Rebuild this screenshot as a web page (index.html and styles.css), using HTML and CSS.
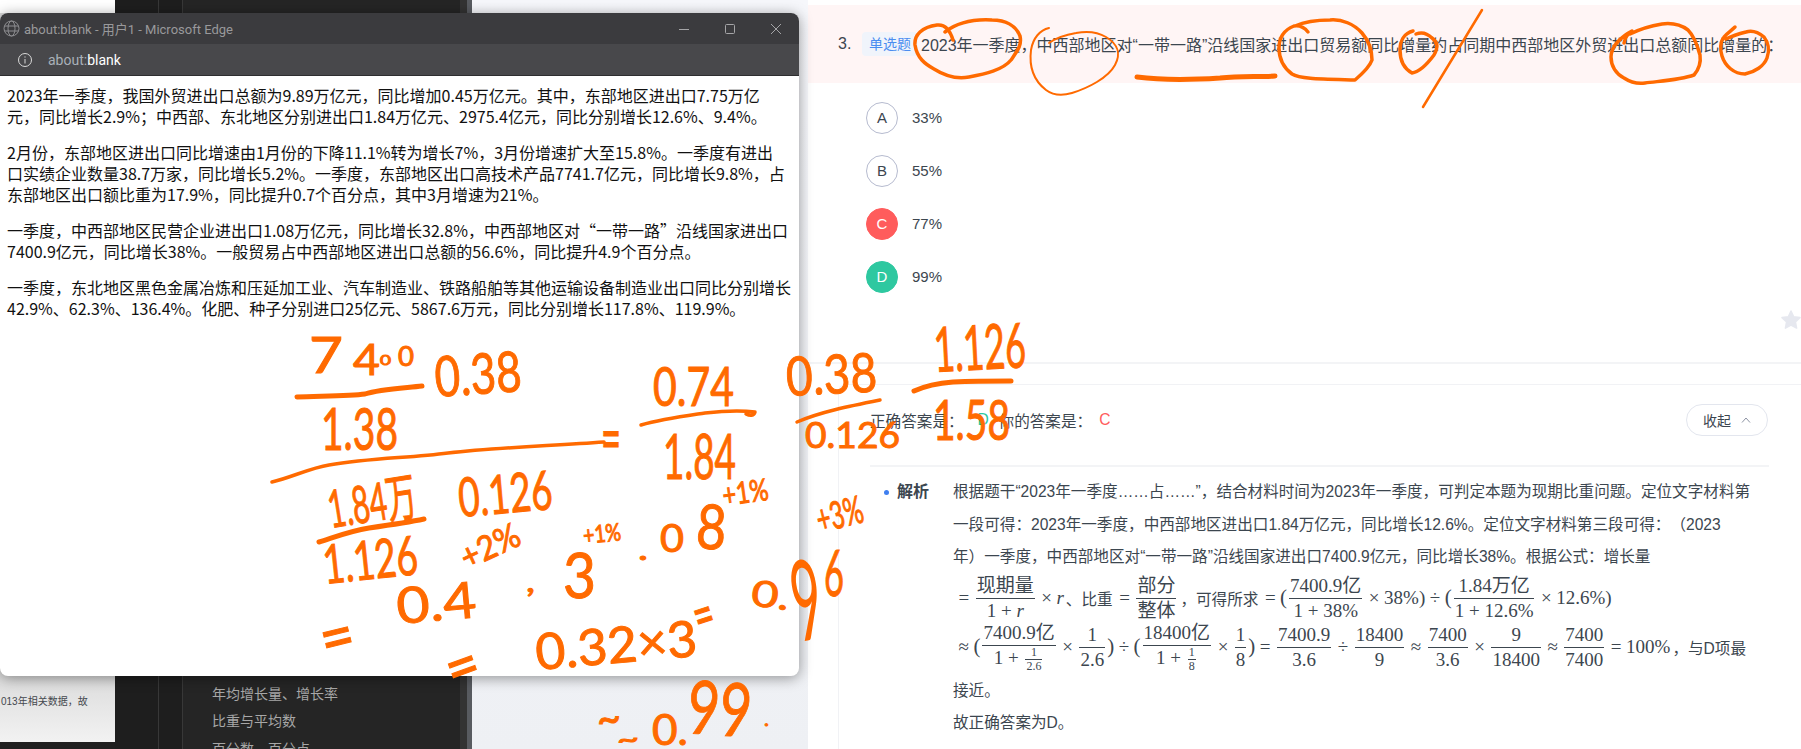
FILE: index.html
```html
<!DOCTYPE html>
<html lang="zh-CN">
<head>
    <meta charset="UTF-8">
    <title>about:blank</title>
    <link rel="stylesheet" href="styles.css">
</head>
<body>
    <!-- background apps -->
    <aside class="doc-strip">
        <p class="doc-line">013年相关数据，故</p>
    </aside>
    <aside class="dark-app">
        <div class="rail"></div>
        <div class="rail"></div>
        <nav class="side-nav">
            <a>年均增长量、增长率</a>
            <a>比重与平均数</a>
            <a>百分数、百分点</a>
        </nav>
        <div class="side-scroll"></div>
    </aside>
    <div class="gutter"></div>

    <!-- question page -->
    <main class="page">
        <section class="question">
            <span class="q-num">3.</span>
            <span class="q-tag">单选题</span>
            <span class="q-text">2023年一季度，中西部地区对“一带一路”沿线国家进出口贸易额同比增量约占同期中西部地区外贸进出口总额同比增量的：</span>
        </section>
        <ul class="options">
            <li class="option"><span class="badge">A</span>33%</li>
            <li class="option"><span class="badge">B</span>55%</li>
            <li class="option"><span class="badge wrong">C</span>77%</li>
            <li class="option"><span class="badge right">D</span>99%</li>
        </ul>
        <svg class="star" width="20" height="20" viewBox="0 0 20 20"><path d="M10 1l2.7 5.8 6.3.8-4.6 4.3 1.2 6.2L10 15.1 4.4 18.1l1.2-6.2L1 7.6l6.3-.8z" fill="#e6e8ef" stroke="#e6e8ef" stroke-width="1.5" stroke-linejoin="round"/></svg>
        <div class="page-rule"></div>
        <section class="card">
            <div class="answer-row">
                <span>正确答案是：</span><span class="ans-right">D</span>
                <span class="ans-mine">你的答案是：</span><span class="ans-wrong">C</span>
                <button class="fold">收起
                    <svg width="10" height="6" viewBox="0 0 10 6"><path d="M1 5.5L5 1l4 4.5" fill="none" stroke="#8c93a3" stroke-width="1"/></svg>
                </button>
            </div>
            <div class="analysis">
                <h3 class="analysis-title">解析</h3>
                <div class="analysis-body">
                    <p class="a-line">根据题干“2023年一季度……占……”，结合材料时间为2023年一季度，可判定本题为现期比重问题。定位文字材料第</p>
                    <p class="a-line">一段可得：2023年一季度，中西部地区进出口1.84万亿元，同比增长12.6%。定位文字材料第三段可得：（2023</p>
                    <p class="a-line">年）一季度，中西部地区对“一带一路”沿线国家进出口7400.9亿元，同比增长38%。根据公式：增长量</p>
                    <div class="math-row row-one">
                        <span class="mo">=</span>
                        <span class="frac"><span>现期量</span><span>1 + <i>r</i></span></span>
                        <span class="mo">×</span><i class="mi">r</i>
                        <span class="cn">、比重</span>
                        <span class="mo">=</span>
                        <span class="frac"><span>部分</span><span>整体</span></span>
                        <span class="cn">，可得所求</span>
                        <span class="mo">=</span><span class="paren">(</span>
                        <span class="frac"><span>7400.9亿</span><span>1 + 38%</span></span>
                        <span class="mo">×</span><span class="mn">38%)</span>
                        <span class="mo">÷</span><span class="paren">(</span>
                        <span class="frac"><span>1.84万亿</span><span>1 + 12.6%</span></span>
                        <span class="mo">×</span><span class="mn">12.6%)</span>
                    </div>
                    <div class="math-row row-two">
                        <span class="mo">≈</span><span class="paren">(</span>
                        <span class="frac"><span>7400.9亿</span><span>1 + <span class="frac small"><span>1</span><span>2.6</span></span></span></span>
                        <span class="mo">×</span>
                        <span class="frac"><span>1</span><span>2.6</span></span>
                        <span class="paren">)</span><span class="mo">÷</span><span class="paren">(</span>
                        <span class="frac"><span>18400亿</span><span>1 + <span class="frac small"><span>1</span><span>8</span></span></span></span>
                        <span class="mo">×</span>
                        <span class="frac"><span>1</span><span>8</span></span>
                        <span class="paren">)</span><span class="mo">=</span>
                        <span class="frac"><span>7400.9</span><span>3.6</span></span>
                        <span class="mo">÷</span>
                        <span class="frac"><span>18400</span><span>9</span></span>
                        <span class="mo">≈</span>
                        <span class="frac"><span>7400</span><span>3.6</span></span>
                        <span class="mo">×</span>
                        <span class="frac"><span>9</span><span>18400</span></span>
                        <span class="mo">≈</span>
                        <span class="frac"><span>7400</span><span>7400</span></span>
                        <span class="mo">=</span><span class="mn">100%</span>
                        <span class="cn">，与D项最</span>
                    </div>
                    <p class="a-line after-math">接近。</p>
                    <p class="a-line">故正确答案为D。</p>
                </div>
            </div>
        </section>
    </main>

    <!-- floating edge window -->
    <div class="window">
        <header class="win-title">
            <svg class="globe" width="17" height="17" viewBox="0 0 17 17" fill="none" stroke="#8f8f92" stroke-width="1"><circle cx="8.5" cy="8.5" r="7.5"/><ellipse cx="8.5" cy="8.5" rx="3.5" ry="7.5"/><path d="M1.5 6h14M1.5 11h14"/></svg>
            <span class="win-name">about:blank - 用户1 - Microsoft Edge</span>
            <div class="win-controls">
                <svg width="12" height="12" viewBox="0 0 12 12" stroke="#a5a5a7" fill="none"><path d="M1 6.5h10"/></svg>
                <svg width="12" height="12" viewBox="0 0 12 12" stroke="#a5a5a7" fill="none"><rect x="1.5" y="1.5" width="9" height="9" rx="1"/></svg>
                <svg width="12" height="12" viewBox="0 0 12 12" stroke="#a5a5a7" fill="none"><path d="M1 1l10 10M11 1L1 11"/></svg>
            </div>
        </header>
        <div class="win-address">
            <svg width="16" height="16" viewBox="0 0 16 16" fill="none" stroke="#d8d8d8"><circle cx="8" cy="8" r="6.5"/><path d="M8 7v4.5M8 4.4v1.2"/></svg>
            <span class="addr"><span class="addr-dim">about:</span>blank</span>
        </div>
        <article class="win-body">
            <p>2023年一季度，我国外贸进出口总额为9.89万亿元，同比增加0.45万亿元。其中，东部地区进出口7.75万亿<br>元，同比增长2.9%；中西部、东北地区分别进出口1.84万亿元、2975.4亿元，同比分别增长12.6%、9.4%。</p>
            <p>2月份，东部地区进出口同比增速由1月份的下降11.1%转为增长7%，3月份增速扩大至15.8%。一季度有进出<br>口实绩企业数量38.7万家，同比增长5.2%。一季度，东部地区出口高技术产品7741.7亿元，同比增长9.8%，占<br>东部地区出口额比重为17.9%，同比提升0.7个百分点，其中3月增速为21%。</p>
            <p>一季度，中西部地区民营企业进出口1.08万亿元，同比增长32.8%，中西部地区对“一带一路”沿线国家进出口<br>7400.9亿元，同比增长38%。一般贸易占中西部地区进出口总额的56.6%，同比提升4.9个百分点。</p>
            <p>一季度，东北地区黑色金属冶炼和压延加工业、汽车制造业、铁路船舶等其他运输设备制造业出口同比分别增长<br>42.9%、62.3%、136.4%。化肥、种子分别进口25亿元、5867.6万元，同比分别增长117.8%、119.9%。</p>
        </article>
    </div>

    <!-- pen annotations drawn over the whole screen -->
    <svg class="ink" width="1801" height="749" viewBox="0 0 1801 749">
        <g class="ink-stroke">
            <path d="M953 40C950 30 945 24 937 25C922 27 914 35 915 45C917 58 925 64 934 69C945 76 958 79 969 77C985 74 1003 70 1011 60C1018 50 1022 45 1020 36C1016 26 1006 20 992 20C975 19 958 22 945 32"/>
            <path class="thin" d="M1049 28C1040 30 1033 38 1031 50C1029 66 1033 80 1046 90C1054 96 1062 96 1072 93C1088 88 1108 78 1115 65C1121 54 1118 44 1106 37C1096 31 1086 31 1076 33C1064 35 1056 38 1049 43"/>
            <path class="heavy" d="M1137 77C1160 80 1190 80 1220 78C1240 76 1258 77 1275 76"/>
            <path d="M1308 32C1304 27 1300 25 1294 26C1284 30 1279 38 1279 48C1279 60 1284 68 1292 74C1300 79 1320 79 1355 80C1362 74 1370 66 1372 60C1372 50 1368 40 1362 33C1354 24 1342 19 1330 20C1316 20 1304 22 1295 26"/>
            <path d="M1413 31C1405 33 1400 40 1400 50C1400 60 1403 68 1412 73C1420 72 1428 63 1434 55C1438 48 1438 42 1432 38C1427 33 1421 32 1416 34"/>
            <path class="slash" d="M1482 10L1423 107"/>
            <path d="M1624 43C1625 38 1627 34 1632 31C1622 36 1611 46 1611 57C1611 66 1616 74 1624 78C1630 82 1637 84 1645 83C1660 81 1680 80 1694 75C1700 68 1701 62 1700 55C1697 44 1694 36 1688 30C1680 24 1670 23 1662 24C1650 26 1640 29 1630 34"/>
            <path d="M1735 27C1731 31 1727 33 1724 37C1720 42 1720 50 1722 56C1725 66 1734 74 1745 74C1755 72 1764 66 1767 58C1770 50 1768 42 1764 37C1758 32 1752 30 1746 32C1738 34 1732 36 1726 39"/>

            <path class="heavy" d="M297 397C320 396 350 396 365 394C380 389 405 388 422 386"/>
            <path d="M272 482C290 478 310 468 329 465C370 458 410 458 448 453C500 447 550 446 604 442"/>
            <path class="heavy" d="M319 542C335 537 350 531 369 528C390 525 410 522 424 519"/>
            <path d="M641 425C662 419 685 416 705 413C722 411 740 410 755 412C754 416 750 416 746 414"/>
            <path d="M797 422C820 412 850 406 880 400"/>
            <path class="heavy" d="M914 391C925 386 940 383 953 382C975 381 995 381 1011 381"/>
        </g>
        <g class="ink-text">
            <text x="309" y="373" font-size="50" textLength="34" lengthAdjust="spacingAndGlyphs">7</text>
            <text x="353" y="375" font-size="42" textLength="27" lengthAdjust="spacingAndGlyphs">4</text>
            <text x="380" y="365" font-size="14" textLength="11" lengthAdjust="spacingAndGlyphs">0</text>
            <text x="398" y="366" font-size="26" textLength="16" lengthAdjust="spacingAndGlyphs">0</text>
            <text x="436" y="397" font-size="56" textLength="87" lengthAdjust="spacingAndGlyphs" transform="rotate(-4 436 397)">0.38</text>
            <text x="321" y="450" font-size="58" textLength="77" lengthAdjust="spacingAndGlyphs">1.38</text>
            <text x="331" y="528" font-size="52" textLength="89" lengthAdjust="spacingAndGlyphs" transform="rotate(-9 331 528)">1.84万</text>
            <text x="460" y="517" font-size="54" textLength="94" lengthAdjust="spacingAndGlyphs" transform="rotate(-5 460 517)">0.126</text>
            <text x="325" y="584" font-size="54" textLength="95" lengthAdjust="spacingAndGlyphs" transform="rotate(-6 325 584)">1.126</text>
            <text x="326" y="663" font-size="66" textLength="34" lengthAdjust="spacingAndGlyphs" transform="rotate(-14 326 663)">=</text>
            <text x="398" y="624" font-size="50" textLength="80" lengthAdjust="spacingAndGlyphs" transform="rotate(-5 398 624)">0.4</text>
            <text x="467" y="570" font-size="34" textLength="62" lengthAdjust="spacingAndGlyphs" transform="rotate(-25 467 570)">+2%</text>
            <text x="526" y="592" font-size="30" textLength="9" lengthAdjust="spacingAndGlyphs">,</text>
            <text x="563" y="598" font-size="62" textLength="33" lengthAdjust="spacingAndGlyphs">3</text>
            <text x="584" y="544" font-size="24" textLength="38" lengthAdjust="spacingAndGlyphs" transform="rotate(-6 584 544)">+1%</text>
            <text x="638" y="560" font-size="30" textLength="10" lengthAdjust="spacingAndGlyphs">.</text>
            <text x="660" y="552" font-size="38" textLength="24" lengthAdjust="spacingAndGlyphs">0</text>
            <text x="695" y="548" font-size="62" textLength="30" lengthAdjust="spacingAndGlyphs" transform="rotate(4 695 548)">8</text>
            <text x="724" y="506" font-size="30" textLength="46" lengthAdjust="spacingAndGlyphs" transform="rotate(-8 724 506)">+1%</text>
            <text x="601" y="462" font-size="66" textLength="20" lengthAdjust="spacingAndGlyphs">=</text>
            <text x="653" y="406" font-size="54" textLength="81" lengthAdjust="spacingAndGlyphs">0.74</text>
            <text x="663" y="479" font-size="62" textLength="73" lengthAdjust="spacingAndGlyphs">1.84</text>
            <text x="787" y="396" font-size="54" textLength="91" lengthAdjust="spacingAndGlyphs" transform="rotate(-3 787 396)">0.38</text>
            <text x="805" y="448" font-size="36" textLength="95" lengthAdjust="spacingAndGlyphs">0.126</text>
            <text x="935" y="372" font-size="62" textLength="92" lengthAdjust="spacingAndGlyphs" transform="rotate(-3 935 372)">1.126</text>
            <text x="933" y="440" font-size="56" textLength="77" lengthAdjust="spacingAndGlyphs">1.58</text>
            <text x="820" y="533" font-size="38" textLength="47" lengthAdjust="spacingAndGlyphs" transform="rotate(-14 820 533)">+3%</text>
            <text x="700" y="637" font-size="58" textLength="20" lengthAdjust="spacingAndGlyphs" transform="rotate(-18 700 637)">=</text>
            <text x="750" y="605" font-size="36" textLength="38" lengthAdjust="spacingAndGlyphs" transform="rotate(8 750 605)">0.</text>
            <text class="ink-tall" x="798" y="642" font-size="112" textLength="30" lengthAdjust="spacingAndGlyphs" transform="rotate(-9 798 642)">9</text>
            <text x="824" y="596" font-size="64" textLength="20" lengthAdjust="spacingAndGlyphs">6</text>
            <text x="454" y="692" font-size="62" textLength="33" lengthAdjust="spacingAndGlyphs" transform="rotate(-20 454 692)">=</text>
            <text x="537" y="670" font-size="50" textLength="162" lengthAdjust="spacingAndGlyphs" transform="rotate(-5 537 670)">0.32×3</text>
            <text x="597" y="733" font-size="42" textLength="24" lengthAdjust="spacingAndGlyphs">~</text>
            <text x="617" y="748" font-size="26" textLength="22" lengthAdjust="spacingAndGlyphs">~</text>
            <text x="652" y="745" font-size="42" textLength="36" lengthAdjust="spacingAndGlyphs">0.</text>
            <text x="686" y="733" font-size="74" textLength="64" lengthAdjust="spacingAndGlyphs" transform="rotate(4 686 733)">99</text>
            <text x="764" y="726" font-size="20" textLength="5" lengthAdjust="spacingAndGlyphs">.</text>
        </g>
    </svg>
</body>
</html>
```

FILE: styles.css
```css
* {
    box-sizing: border-box;
}

body {
    margin: 0;
    width: 1801px;
    height: 749px;
    display: flex;
    position: relative;
    overflow: hidden;
    background: #1f1f1f;
    font-family: "Liberation Sans", "Noto Sans CJK SC", sans-serif;
    color: #3c464f;
}

/* background apps */
.doc-strip {
    width: 115px;
    height: 742px;
    background: linear-gradient(#fff 13px, #d9d9d9 13px, #dcdcdc 676px, #f2f2f2);
    display: flex;
    align-items: flex-end;
    padding-bottom: 34px;
    flex: none;
}
.doc-line {
    margin: 0 0 0 1px;
    font-size: 10px;
    color: #45494f;
}

.dark-app {
    width: 357px;
    flex: none;
    display: flex;
    background: #1e1e1e;
    color: #a7a7a7;
}
.rail {
    width: 44px;
    border-right: 1px solid #383838;
}
.rail:nth-child(2) {
    width: 24px;
}
.side-nav {
    flex: 1;
    background: #252525;
    padding-left: 29px;
    display: flex;
    flex-direction: column;
    justify-content: flex-end;
    margin-bottom: -14px;
    font-size: 14px;
}
.side-nav a {
    height: 27.5px;
    line-height: 27.5px;
}
.side-scroll {
    width: 12px;
    background: #333;
    border-right: 5px solid #585b60;
}

.gutter {
    width: 336px;
    flex: none;
    background: linear-gradient(#f6f7fb, #eef0f4);
}

/* question page */
.page {
    flex: 1;
    background: #fff;
    position: relative;
    padding-top: 5px;
    min-width: 0;
}
.question {
    height: 78px;
    background: #fff5f5;
    display: flex;
    align-items: center;
    padding-left: 30px;
    font-size: 16px;
    white-space: nowrap;
}
.q-num {
    width: 24px;
}
.q-tag {
    width: 56px;
    height: 24px;
    line-height: 24px;
    margin-right: 3px;
    padding-left: 7px;
    font-size: 14px;
    border-radius: 4px;
    background: #f0f4fb;
    color: #4b8df0;
}

.options {
    list-style: none;
    margin: 0;
    padding: 8px 0 0 58px;
}
.option {
    height: 53px;
    display: flex;
    align-items: center;
    font-size: 15px;
}
.badge {
    width: 32px;
    height: 32px;
    border-radius: 50%;
    border: 1px solid #b6bbcf;
    margin-right: 14px;
    display: flex;
    align-items: center;
    justify-content: center;
}
.badge.wrong {
    background: #ff5c5c;
    border-color: #ff5c5c;
    color: #fff;
}
.badge.right {
    background: #2ec8a0;
    border-color: #2ec8a0;
    color: #fff;
}
.star {
    position: absolute;
    top: 310px;
    right: 0;
}
.page-rule {
    height: 2px;
    margin-top: 59px;
    background: #f3f4f6;
}

.card {
    margin: 20px 0 0 30px;
    height: 400px;
    border: 1px solid #f1f2f5;
    border-right: 0;
    border-radius: 8px 0 0 0;
    padding: 12px 32px 0 31px;
    font-size: 15.6px;
}
.answer-row {
    display: flex;
    align-items: center;
    height: 70px;
    border-bottom: 2px solid #f3f4f6;
    padding-bottom: 22px;
}
.ans-right {
    color: #2ec8a0;
    width: 35px;
    padding-left: 14px;
}
.ans-wrong {
    color: #ff5c5c;
    margin-left: 7px;
}
.fold {
    margin-left: auto;
    margin-right: 1px;
    width: 82px;
    height: 32px;
    border-radius: 16px;
    border: 1px solid #e3e6ee;
    background: #fff;
    font: inherit;
    font-size: 14px;
    color: #3c464f;
    display: flex;
    align-items: center;
    justify-content: center;
    gap: 10px;
}

.analysis {
    display: flex;
    padding-top: 9px;
}
.analysis-title {
    margin: 0;
    width: 83px;
    padding-left: 27px;
    line-height: 32px;
    font-size: 16px;
    position: relative;
}
.analysis-title::before {
    content: "";
    position: absolute;
    left: 14px;
    top: 14px;
    width: 5px;
    height: 5px;
    border-radius: 50%;
    background: #3f7ff0;
}
.analysis-body {
    flex: 1;
    white-space: nowrap;
    text-spacing-trim: space-all;
}
.a-line {
    margin: 0;
    height: 32.5px;
    line-height: 32.5px;
}
.after-math {
    margin-top: 3px;
}

/* formulas */
.math-row {
    display: flex;
    align-items: center;
    font-family: "Liberation Serif", "Noto Sans CJK SC", serif;
    font-size: 19px;
    padding-left: 1px;
}
.row-one {
    height: 48px;
}
.row-two {
    height: 50px;
}
.frac {
    display: inline-flex;
    flex-direction: column;
    align-items: center;
    vertical-align: middle;
    margin: 0 2px;
    line-height: 23px;
}
.frac > span {
    padding: 0 1px;
    white-space: nowrap;
}
.frac > span:first-child {
    border-bottom: 1px solid #3c464f;
    width: 100%;
    text-align: center;
    padding-bottom: 1px;
}
.frac.small {
    font-size: 12px;
    line-height: 12px;
}
.mo {
    margin: 0 4.5px;
}
.paren {
    font-size: 21px;
}
.cn {
    font-family: "Liberation Sans", "Noto Sans CJK SC", sans-serif;
    font-size: 15.6px;
    margin: 0 2px;
}

/* floating window */
.window {
    position: absolute;
    left: 0;
    top: 13px;
    width: 799px;
    height: 663px;
    border-radius: 8px;
    overflow: hidden;
    background: #fff;
    box-shadow: 0 2px 14px rgba(0, 0, 0, 0.4);
    display: flex;
    flex-direction: column;
}
.win-title {
    height: 31px;
    background: #3b3b3e;
    display: flex;
    align-items: center;
    padding: 0 17px 0 3px;
    color: #99999b;
    font-size: 13px;
    font-family: "Roboto", "Noto Sans CJK SC", sans-serif;
}
.win-name {
    margin-left: 4px;
}
.win-controls {
    margin-left: auto;
    display: flex;
    gap: 34px;
}
.win-address {
    height: 32px;
    background: #48484b;
    border-bottom: 1px solid #2e2e30;
    display: flex;
    align-items: center;
    padding-left: 17px;
    font-size: 14px;
    font-family: "Roboto", sans-serif;
    color: #fff;
}
.addr {
    margin-left: 15px;
}
.addr-dim {
    color: #a9b0b8;
}
.win-body {
    padding: 0 7px;
    font-family: "Noto Sans CJK SC", sans-serif;
    font-size: 16px;
    line-height: 21px;
    color: #111;
    white-space: nowrap;
}
.win-body p {
    margin: 9px 0 15px;
}

/* pen strokes */
.ink {
    position: absolute;
    left: 0;
    top: 0;
    pointer-events: none;
}
.ink-stroke path {
    fill: none;
    stroke: #ff6a00;
    stroke-width: 3.5;
    stroke-linecap: round;
    stroke-linejoin: round;
}
.ink-stroke path.thin {
    stroke-width: 2;
}
.ink-stroke path.heavy {
    stroke-width: 5;
}
.ink-stroke path.slash {
    stroke-width: 2.5;
}
.ink-text text {
    fill: #ff6a00;
    stroke: #ff6a00;
    stroke-width: 1;
    font-family: "Lato", "Noto Sans CJK SC", sans-serif;
}
.ink-text text.ink-tall {
    stroke-width: 0;
}
```
